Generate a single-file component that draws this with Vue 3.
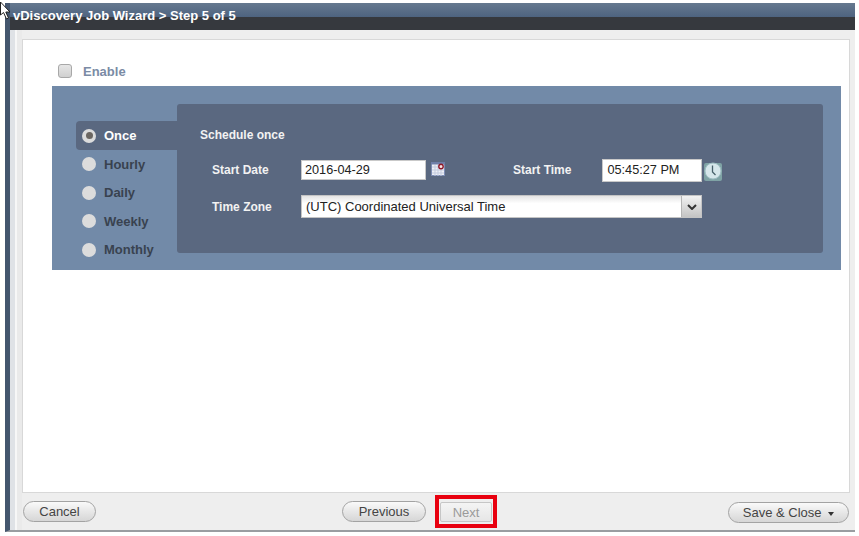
<template>
  <div class="page">
    <svg class="cursor" width="24" height="24" viewBox="0 0 24 24">
      <path d="M0.5 2 L0.5 15 L3.5 12.5 L6.5 19 L8.5 18 L5.8 12 L10 12 Z" fill="#fff" stroke="#222" stroke-width="1" />
    </svg>
    <div class="window">
      <div class="titlebar">
        <div class="title-top">vDiscovery Job Wizard &gt; Step 5 of 5</div>
        <div class="title-bottom"></div>
      </div>
      <div class="content">
        <div class="panel">
          <label class="enable">
            <input type="checkbox" />
            <span>Enable</span>
          </label>
          <div class="schedule">
            <ul class="tabs">
              <li
                v-for="tab in tabs"
                :key="tab"
                class="tab"
                :class="{ active: tab === selected }"
              >
                <span class="radio"></span>
                {{ tab }}
              </li>
            </ul>
            <div class="details">
              <h3>Schedule once</h3>
              <div class="row date-row">
                <span class="label">Start Date</span>
                <input class="date" type="text" value="2016-04-29" />
                <svg class="calendar" width="14" height="14" viewBox="0 0 14 14">
                  <rect x="0.5" y="0.5" width="13" height="13" fill="#eef0f6" stroke="#7d8db4" />
                  <rect x="0" y="0" width="14" height="2.5" fill="#6f7fa8" />
                  <path d="M1 5H13M1 8H13M1 11H13M4 3V14M7 3V14M10 3V14" stroke="#c3cbde" stroke-width="1" />
                  <circle cx="10" cy="4.5" r="2.2" fill="#f6e7e7" stroke="#8e1a2b" stroke-width="1.4" />
                </svg>
                <span class="label time-label">Start Time</span>
                <input class="time" type="text" value="05:45:27 PM" />
                <svg class="clock" width="18" height="19" viewBox="0 0 18 19">
                  <rect x="0" y="1" width="18" height="18" rx="2" fill="#7fa3a5" />
                  <circle cx="9" cy="9" r="8" fill="#d5e6ea" stroke="#9dbcc2" />
                  <path d="M8.5 3.5V10L11.5 13" fill="none" stroke="#47606a" stroke-width="1.3" />
                </svg>
              </div>
              <div class="row zone-row">
                <span class="label">Time Zone</span>
                <div class="select">
                  <span class="select-text">(UTC) Coordinated Universal Time</span>
                  <span class="select-arrow">
                    <svg width="10" height="6" viewBox="0 0 10 6">
                      <path d="M1 1L5 5L9 1" fill="none" stroke="#333" stroke-width="2" />
                    </svg>
                  </span>
                </div>
              </div>
            </div>
          </div>
        </div>
        <div class="footer">
          <button class="btn cancel" type="button">Cancel</button>
          <div class="nav">
            <button class="btn previous" type="button">Previous</button>
            <div class="highlight">
              <button class="next" type="button" disabled>Next</button>
            </div>
          </div>
          <button class="btn save" type="button">Save &amp; Close <i class="caret"></i></button>
        </div>
      </div>
    </div>
  </div>
</template>

<script setup>
const tabs = ['Once', 'Hourly', 'Daily', 'Weekly', 'Monthly']
const selected = 'Once'
</script>

<style>
html,
body {
  margin: 0;
  background: #fff;
}
</style>

<style scoped>
.page {
  position: relative;
  width: 859px;
  height: 536px;
  overflow: hidden;
  padding: 3px 4px 4px 5px;
  box-sizing: border-box;
  background: #fff;
  font-family: "Liberation Sans", Arial, sans-serif;
}

.cursor {
  position: absolute;
  left: 0;
  top: 0;
  z-index: 2;
}

.window {
  height: 100%;
  display: flex;
  flex-direction: column;
  box-sizing: border-box;
  border-left: 5px solid #44566e;
  border-bottom: 2px solid #9a9da1;
  background: #eeeeee;
}

.titlebar {
  flex: none;
}

.title-top {
  height: 14px;
  padding-left: 3px;
  background: linear-gradient(#66798f, #4e6480);
  color: #fff;
  font-size: 13px;
  font-weight: bold;
  line-height: 25px;
  white-space: nowrap;
}

.title-bottom {
  height: 13px;
  background: #36393e;
}

.content {
  flex: 1;
  display: flex;
  flex-direction: column;
  padding: 9px 5px 0 12px;
  min-height: 0;
  background: linear-gradient(90deg, #dfe2e6 0 5px, #f7f7f7 5px 7px, #eaeaea 7px 12px, #eeeeee 12px);
}

.panel {
  height: 454px;
  box-sizing: border-box;
  background: #fff;
  border: 1px solid #d8d8d8;
  padding-top: 20px;
  padding-left: 29px;
}

.enable {
  display: flex;
  align-items: center;
  height: 22px;
  margin-left: 6px;
  color: #7b8ba5;
  font-size: 13px;
  font-weight: bold;
}

.enable input {
  appearance: none;
  width: 14px;
  height: 14px;
  margin: 0 11px 0 0;
  border: 1px solid #a8a8a8;
  border-radius: 3px;
  background: linear-gradient(#e6e6e6, #d0d0d0);
}

.schedule {
  display: flex;
  width: 789px;
  height: 184px;
  margin-top: 4px;
  box-sizing: border-box;
  padding: 18px 18px 17px 24px;
  background: #728aa8;
}

.tabs {
  width: 101px;
  margin: 17px 0 0;
  padding: 0;
  list-style: none;
}

.tab {
  display: flex;
  align-items: center;
  height: 28.5px;
  padding-left: 6px;
  box-sizing: border-box;
  color: #39424f;
  font-size: 13px;
  font-weight: bold;
}

.tab.active {
  height: 29px;
  border-radius: 4px 0 0 4px;
  background: #5a6880;
  color: #fff;
}

.radio {
  position: relative;
  width: 14px;
  height: 14px;
  margin-right: 8px;
  border-radius: 50%;
  background: #dcdcdc;
}

.tab.active .radio::after {
  content: "";
  position: absolute;
  left: 3.5px;
  top: 3.5px;
  width: 7px;
  height: 7px;
  border-radius: 50%;
  background: #6b6661;
}

.details {
  flex: 1;
  border-radius: 3px;
  background: #5a6880;
  padding-left: 23px;
  color: #f2f2f2;
}

.details h3 {
  margin: 24px 0 0;
  font-size: 12px;
  font-weight: bold;
  line-height: 14px;
}

.row {
  display: flex;
  align-items: center;
}

.date-row {
  margin-top: 16px;
  height: 24px;
}

.zone-row {
  margin-top: 13px;
  height: 23px;
}

.label {
  width: 101px;
  padding-left: 12px;
  box-sizing: border-box;
  flex: none;
  font-size: 12px;
  font-weight: bold;
}

input.date,
input.time {
  box-sizing: border-box;
  border: 1px solid #c9c9c9;
  background: #fff;
  color: #222;
  font-family: inherit;
  font-size: 12.7px;
  outline: none;
}

input.date {
  width: 125px;
  height: 20px;
  padding: 0 3px;
}

.calendar {
  margin: -2px 0 0 5px;
}

.time-label {
  width: auto;
  padding-left: 0;
  margin-left: 68px;
}

input.time {
  width: 100px;
  height: 23px;
  margin-left: 31px;
  padding: 0 4px;
}

.clock {
  margin: 2px 0 0 2px;
}

.select {
  display: flex;
  width: 401px;
  height: 23px;
  box-sizing: border-box;
  border: 1px solid #c4c4c4;
  background: linear-gradient(#e4e4e4, #fff 35%);
  color: #222;
  font-size: 13px;
  line-height: 21px;
}

.select-text {
  flex: 1;
  padding-left: 4px;
}

.select-arrow {
  width: 19px;
  display: flex;
  align-items: center;
  justify-content: center;
  border-left: 1px solid #b5b5b5;
  background: linear-gradient(#f2f2f2, #c4c4c4);
}

.footer {
  flex: 1;
  display: flex;
  align-items: center;
  padding: 0 1px 0 1px;
  min-height: 0;
}

.btn {
  height: 21px;
  padding: 0;
  border: 1px solid #a3a3a3;
  border-radius: 11px;
  background: linear-gradient(#fafafa, #e9e9e9 45%, #d6d6d6);
  color: #444;
  font-family: inherit;
  font-size: 13px;
}

.cancel {
  width: 73px;
}

.nav {
  display: flex;
  align-items: center;
  margin-left: 246px;
}

.previous {
  width: 84px;
}

.highlight {
  box-sizing: border-box;
  width: 62px;
  height: 33px;
  margin-left: 9px;
  padding: 3px 1px;
  border: 4px solid #e8000f;
}

.next {
  display: block;
  width: 52px;
  height: 20px;
  padding: 0;
  border: 1px solid #c6c6c6;
  border-radius: 2px;
  background: linear-gradient(#f4f4f4, #e6e6e6);
  color: #9a9a9a;
  font-family: inherit;
  font-size: 13px;
}

.save {
  width: 121px;
  margin-left: auto;
  margin-top: 2px;
}

.caret {
  display: inline-block;
  margin-left: 3px;
  vertical-align: 1px;
  border-left: 3.5px solid transparent;
  border-right: 3.5px solid transparent;
  border-top: 4px solid #333;
}
</style>
